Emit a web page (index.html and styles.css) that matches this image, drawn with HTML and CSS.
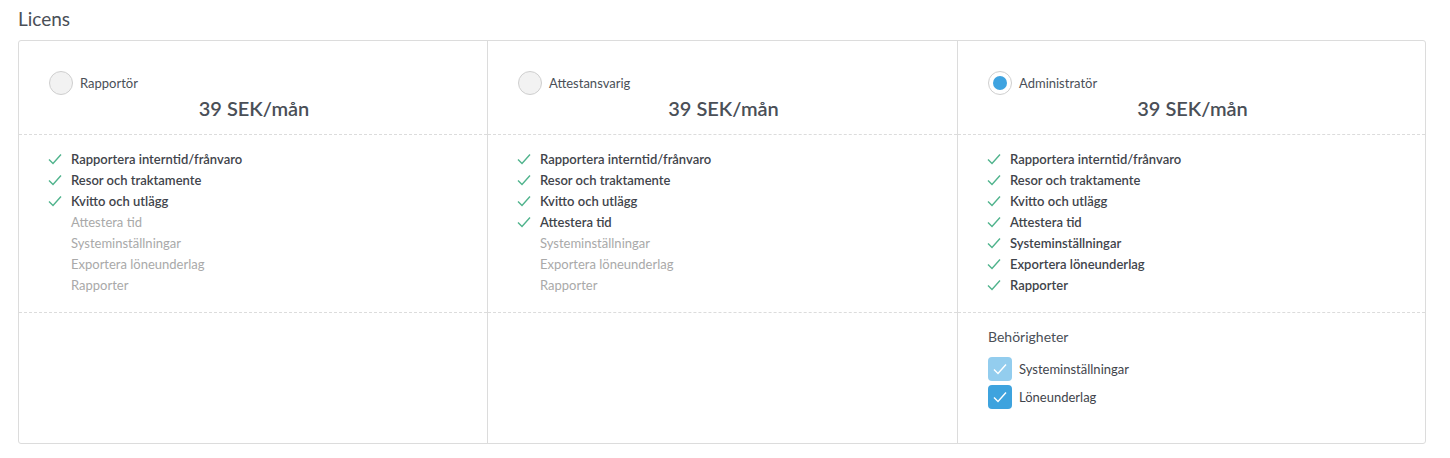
FILE: index.html
```html
<!DOCTYPE html>
<html lang="sv">
<head>
<meta charset="utf-8">
<title>Licens</title>
<link rel="stylesheet" href="styles.css">
</head>
<body>
<h2 class="title">Licens</h2>
<div class="card">
  <div class="col">
    <div class="head">
      <label class="radio-row"><span class="radio"></span><span class="radio-label">Rapportör</span></label>
      <div class="price">39 SEK/mån</div>
    </div>
    <ul class="features">
      <li class="on"><svg class="chk" viewBox="0 0 14 12"><path d="M1 6.5 L5 10.5 L13 1.5"/></svg>Rapportera interntid/frånvaro</li>
      <li class="on"><svg class="chk" viewBox="0 0 14 12"><path d="M1 6.5 L5 10.5 L13 1.5"/></svg>Resor och traktamente</li>
      <li class="on"><svg class="chk" viewBox="0 0 14 12"><path d="M1 6.5 L5 10.5 L13 1.5"/></svg>Kvitto och utlägg</li>
      <li class="off">Attestera tid</li>
      <li class="off">Systeminställningar</li>
      <li class="off">Exportera löneunderlag</li>
      <li class="off">Rapporter</li>
    </ul>
    <div class="extra"></div>
  </div>
  <div class="col">
    <div class="head">
      <label class="radio-row"><span class="radio"></span><span class="radio-label">Attestansvarig</span></label>
      <div class="price">39 SEK/mån</div>
    </div>
    <ul class="features">
      <li class="on"><svg class="chk" viewBox="0 0 14 12"><path d="M1 6.5 L5 10.5 L13 1.5"/></svg>Rapportera interntid/frånvaro</li>
      <li class="on"><svg class="chk" viewBox="0 0 14 12"><path d="M1 6.5 L5 10.5 L13 1.5"/></svg>Resor och traktamente</li>
      <li class="on"><svg class="chk" viewBox="0 0 14 12"><path d="M1 6.5 L5 10.5 L13 1.5"/></svg>Kvitto och utlägg</li>
      <li class="on"><svg class="chk" viewBox="0 0 14 12"><path d="M1 6.5 L5 10.5 L13 1.5"/></svg>Attestera tid</li>
      <li class="off">Systeminställningar</li>
      <li class="off">Exportera löneunderlag</li>
      <li class="off">Rapporter</li>
    </ul>
    <div class="extra"></div>
  </div>
  <div class="col">
    <div class="head">
      <label class="radio-row"><span class="radio selected"><span class="dot"></span></span><span class="radio-label">Administratör</span></label>
      <div class="price">39 SEK/mån</div>
    </div>
    <ul class="features">
      <li class="on"><svg class="chk" viewBox="0 0 14 12"><path d="M1 6.5 L5 10.5 L13 1.5"/></svg>Rapportera interntid/frånvaro</li>
      <li class="on"><svg class="chk" viewBox="0 0 14 12"><path d="M1 6.5 L5 10.5 L13 1.5"/></svg>Resor och traktamente</li>
      <li class="on"><svg class="chk" viewBox="0 0 14 12"><path d="M1 6.5 L5 10.5 L13 1.5"/></svg>Kvitto och utlägg</li>
      <li class="on"><svg class="chk" viewBox="0 0 14 12"><path d="M1 6.5 L5 10.5 L13 1.5"/></svg>Attestera tid</li>
      <li class="on"><svg class="chk" viewBox="0 0 14 12"><path d="M1 6.5 L5 10.5 L13 1.5"/></svg>Systeminställningar</li>
      <li class="on"><svg class="chk" viewBox="0 0 14 12"><path d="M1 6.5 L5 10.5 L13 1.5"/></svg>Exportera löneunderlag</li>
      <li class="on"><svg class="chk" viewBox="0 0 14 12"><path d="M1 6.5 L5 10.5 L13 1.5"/></svg>Rapporter</li>
    </ul>
    <div class="extra">
      <div class="perm-title">Behörigheter</div>
      <div class="perm">
        <span class="cbox light"><svg viewBox="0 0 24 24"><path d="M6 12.5 L10 16.5 L18 7.5"/></svg></span>
        <span class="perm-label">Systeminställningar</span>
      </div>
      <div class="perm">
        <span class="cbox"><svg viewBox="0 0 24 24"><path d="M6 12.5 L10 16.5 L18 7.5"/></svg></span>
        <span class="perm-label">Löneunderlag</span>
      </div>
    </div>
  </div>
</div>
</body>
</html>
```

FILE: styles.css
```css
* { box-sizing: border-box; }
body {
  margin: 0;
  padding: 0 24px 0 18px;
  background: #fff;
  font-family: Lato, "Open Sans", sans-serif;
  color: #4a4f57;
}
.title {
  margin: 0;
  padding-top: 7px;
  height: 40px;
  font-size: 19px;
  font-weight: 400;
  line-height: 24px;
  color: #4a4f57;
}
.card {
  display: grid;
  grid-template-columns: 468px 470px 1fr;
  border: 1px solid #dcdcdc;
  border-radius: 3px;
  width: 1408px;
  height: 404px;
}
.col {
  display: flex;
  flex-direction: column;
  border-left: 1px solid #dcdcdc;
}
.col:first-child { border-left: none; }
.head {
  height: 94px;
  padding: 30px 30px 0 30px;
  border-bottom: 1px dashed #dcdcdc;
}
.radio-row {
  display: flex;
  align-items: center;
  gap: 7px;
  height: 24px;
}
.radio {
  width: 24px;
  height: 24px;
  border-radius: 50%;
  border: 1px solid #cfcfcf;
  background: #f2f2f2;
  display: flex;
  align-items: center;
  justify-content: center;
}
.radio.selected { background: #fff; }
.dot {
  width: 14px;
  height: 14px;
  border-radius: 50%;
  background: #3ea3e0;
}
.radio-label {
  font-size: 13px;
  color: #4a4f57;
}
.price {
  text-align: center;
  font-size: 20px;
  line-height: 24px;
  font-weight: 600;
  margin-top: 1px;
  padding-left: 2px;
  color: #4a4f57;
}
.features {
  list-style: none;
  margin: 0;
  padding: 13px 30px 0 29px;
  height: 178px;
  border-bottom: 1px dashed #dcdcdc;
}
.features li {
  display: flex;
  align-items: center;
  height: 21px;
  font-size: 13px;
  padding-left: 23px;
  position: relative;
}
.features li.on { color: #3f444b; font-weight: 600; }
.features li.off { color: #a9a9a9; }
.chk {
  position: absolute;
  left: 0;
  top: 5px;
  width: 14px;
  height: 12px;
  fill: none;
  stroke: #4fb38c;
  stroke-width: 1.4;
}
.extra {
  flex: 1;
  padding: 15px 30px 0 30px;
}
.perm-title {
  font-size: 14px;
  line-height: 18px;
  margin-bottom: 11px;
}
.perm {
  display: flex;
  align-items: center;
  gap: 7px;
  margin-bottom: 4px;
}
.cbox {
  width: 24px;
  height: 24px;
  border-radius: 4px;
  background: #3ea3de;
  display: flex;
}
.cbox.light { background: #93cdee; }
.cbox svg {
  width: 24px;
  height: 24px;
  fill: none;
  stroke: #fff;
  stroke-width: 1.4;
}
.perm-label {
  font-size: 13px;
  color: #3f444b;
}
```
